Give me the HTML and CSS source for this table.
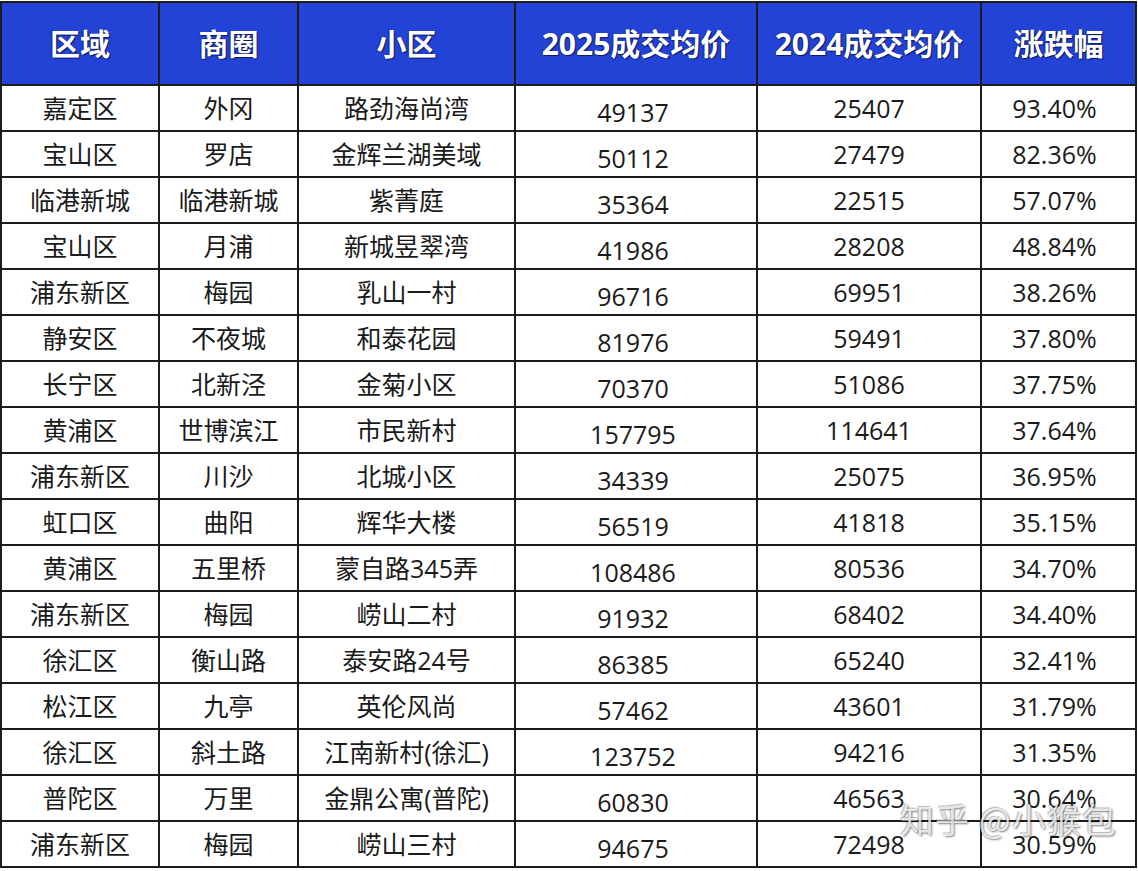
FILE: index.html
```html
<!DOCTYPE html>
<html lang="zh-CN">
<head>
<meta charset="utf-8">
<title>成交均价涨跌幅</title>
<link rel="stylesheet" href="styles.css">
</head>
<body>
<div class="sheet">
  <div class="grid">
    <div class="th">区域</div><div class="th">商圈</div><div class="th">小区</div><div class="th">2025成交均价</div><div class="th">2024成交均价</div><div class="th">涨跌幅</div>

    <div class="td">嘉定区</div><div class="td">外冈</div><div class="td">路劲海尚湾</div><div class="td low">49137</div><div class="td">25407</div><div class="td pct">93.40%</div>
    <div class="td">宝山区</div><div class="td">罗店</div><div class="td">金辉兰湖美域</div><div class="td low">50112</div><div class="td">27479</div><div class="td pct">82.36%</div>
    <div class="td">临港新城</div><div class="td">临港新城</div><div class="td">紫菁庭</div><div class="td low">35364</div><div class="td">22515</div><div class="td pct">57.07%</div>
    <div class="td">宝山区</div><div class="td">月浦</div><div class="td">新城昱翠湾</div><div class="td low">41986</div><div class="td">28208</div><div class="td pct">48.84%</div>
    <div class="td">浦东新区</div><div class="td">梅园</div><div class="td">乳山一村</div><div class="td low">96716</div><div class="td">69951</div><div class="td pct">38.26%</div>
    <div class="td">静安区</div><div class="td">不夜城</div><div class="td">和泰花园</div><div class="td low">81976</div><div class="td">59491</div><div class="td pct">37.80%</div>
    <div class="td">长宁区</div><div class="td">北新泾</div><div class="td">金菊小区</div><div class="td low">70370</div><div class="td">51086</div><div class="td pct">37.75%</div>
    <div class="td">黄浦区</div><div class="td">世博滨江</div><div class="td">市民新村</div><div class="td low">157795</div><div class="td">114641</div><div class="td pct">37.64%</div>
    <div class="td">浦东新区</div><div class="td">川沙</div><div class="td">北城小区</div><div class="td low">34339</div><div class="td">25075</div><div class="td pct">36.95%</div>
    <div class="td">虹口区</div><div class="td">曲阳</div><div class="td">辉华大楼</div><div class="td low">56519</div><div class="td">41818</div><div class="td pct">35.15%</div>
    <div class="td">黄浦区</div><div class="td">五里桥</div><div class="td">蒙自路345弄</div><div class="td low">108486</div><div class="td">80536</div><div class="td pct">34.70%</div>
    <div class="td">浦东新区</div><div class="td">梅园</div><div class="td">崂山二村</div><div class="td low">91932</div><div class="td">68402</div><div class="td pct">34.40%</div>
    <div class="td">徐汇区</div><div class="td">衡山路</div><div class="td">泰安路24号</div><div class="td low">86385</div><div class="td">65240</div><div class="td pct">32.41%</div>
    <div class="td">松江区</div><div class="td">九亭</div><div class="td">英伦风尚</div><div class="td low">57462</div><div class="td">43601</div><div class="td pct">31.79%</div>
    <div class="td">徐汇区</div><div class="td">斜土路</div><div class="td">江南新村(徐汇)</div><div class="td low">123752</div><div class="td">94216</div><div class="td pct">31.35%</div>
    <div class="td">普陀区</div><div class="td">万里</div><div class="td">金鼎公寓(普陀)</div><div class="td low">60830</div><div class="td">46563</div><div class="td pct">30.64%</div>
    <div class="td">浦东新区</div><div class="td">梅园</div><div class="td">崂山三村</div><div class="td low">94675</div><div class="td">72498</div><div class="td pct">30.59%</div>
  </div>
  <div class="watermark">知乎 @小猴包</div>
</div>
</body>
</html>
```

FILE: styles.css
```css
html, body {
  margin: 0;
  padding: 0;
  background: #ffffff;
}

.sheet {
  position: relative;
  width: 1137px;
  margin-top: 1px;
}

.grid {
  display: grid;
  grid-template-columns: 156px 137px 215px 240px 222px 153px;
  grid-template-rows: 81px repeat(17, 44px);
  gap: 2px;
  padding: 2px;
  background: #1c1c1c;
  font-family: "Open Sans", "Noto Sans CJK SC", "Microsoft YaHei", sans-serif;
}

.th {
  background: #2343d6;
  color: #ffffff;
  font-size: 30px;
  font-weight: 700;
  display: flex;
  align-items: center;
  justify-content: center;
  text-shadow: 1px 1px 1px rgba(0, 0, 30, 0.65), -1px 0 1px rgba(0, 0, 30, 0.4);
  line-height: 1;
}

.td {
  background: #ffffff;
  color: #1a1a1a;
  font-size: 25px;
  display: flex;
  align-items: center;
  justify-content: center;
  line-height: 1;
}

.td.low {
  padding-top: 8px;
  padding-right: 6px;
  box-sizing: border-box;
}

.td.pct {
  padding-right: 8px;
  box-sizing: border-box;
}

.watermark {
  position: absolute;
  left: 900px;
  top: 796px;
  font-family: "Noto Sans CJK SC", sans-serif;
  font-size: 34px;
  line-height: 1.3;
  color: rgba(255, 255, 255, 0.8);
  text-shadow: 1px 1px 2px rgba(0, 0, 0, 0.5), -1px -1px 1px rgba(0, 0, 0, 0.25);
  letter-spacing: 1px;
  pointer-events: none;
}
```
